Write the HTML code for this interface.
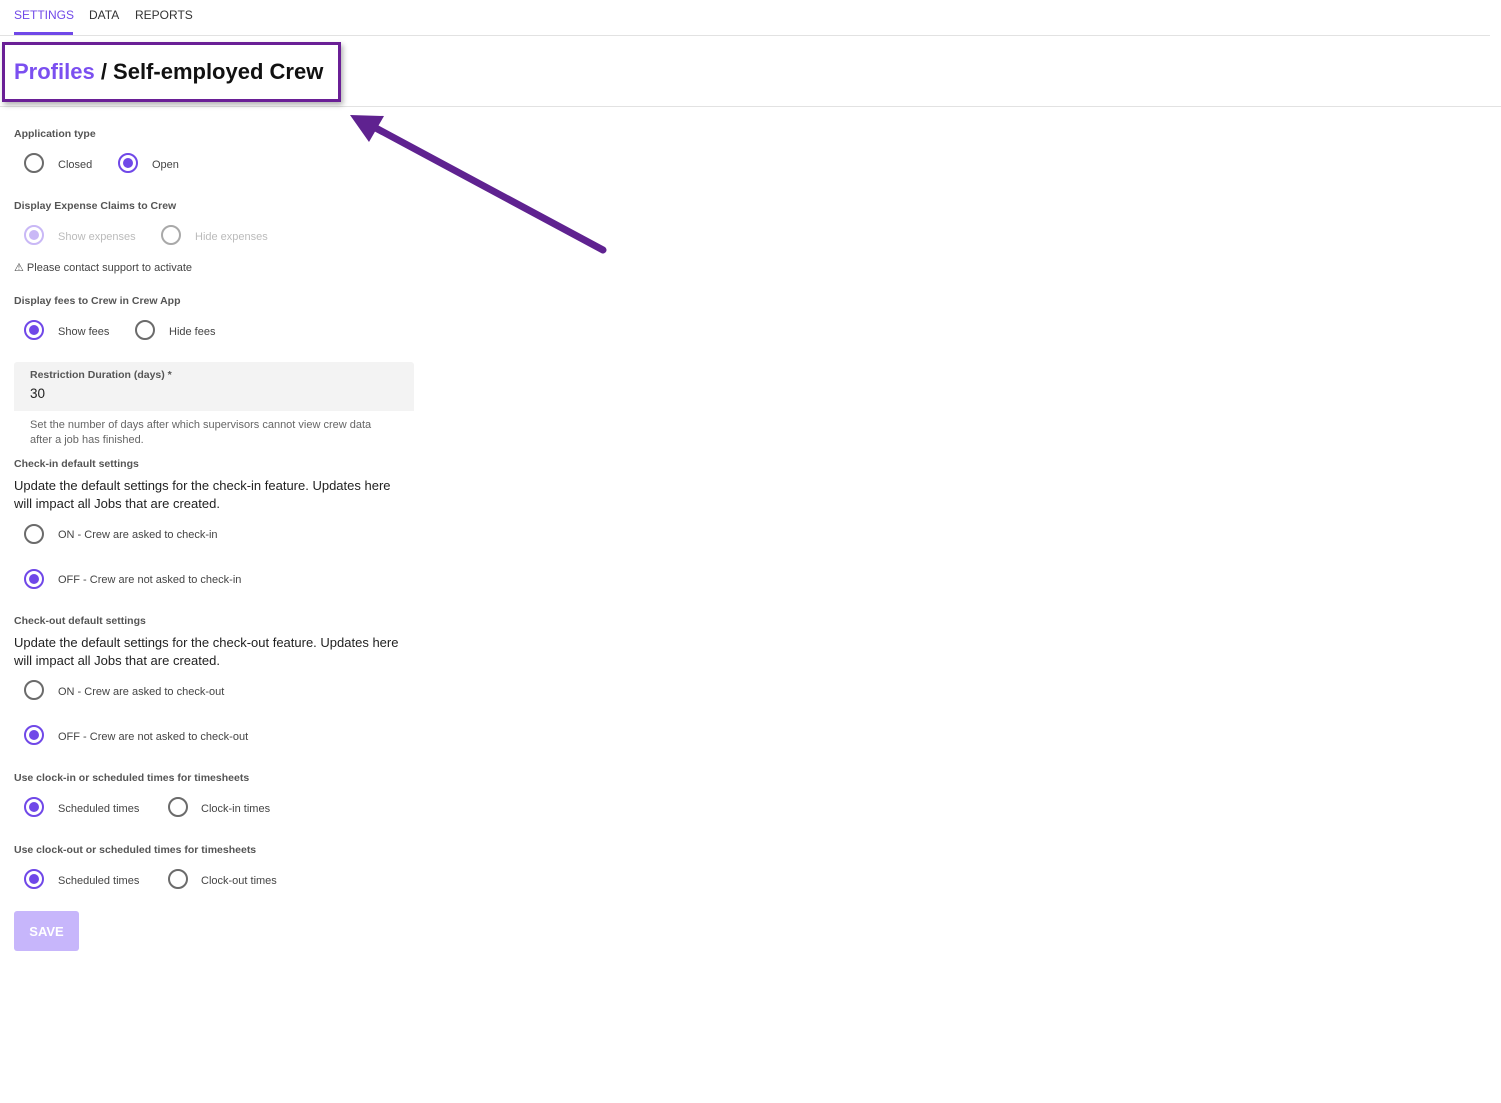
<!DOCTYPE html>
<html><head><meta charset="utf-8"><style>
html,body{margin:0;padding:0;background:#fff;width:1501px;height:1103px;overflow:hidden;position:relative;font-family:"Liberation Sans",sans-serif;}
.t{position:absolute;white-space:nowrap;line-height:16px;margin-top:1px;}
.tab{font-size:12px;color:#333;top:6px;}
.lbl{font-size:10.5px;font-weight:bold;color:#555;}
.rt{font-size:11px;color:#444;}
.p{font-size:13px;color:#222;}
.r{position:absolute;width:20px;height:20px;box-sizing:border-box;border:2px solid #6b6b6b;border-radius:50%;}
.r.on{border-color:#7048e8;}
.r.on::after{content:"";position:absolute;left:3px;top:3px;width:10px;height:10px;border-radius:50%;background:#7048e8;}
.r.dis{border-color:#c9b8f6;}
.r.dis::after{content:"";position:absolute;left:3px;top:3px;width:10px;height:10px;border-radius:50%;background:#c9b8f6;}
.r.dg{border-color:#a9a9a9;}
</style></head><body>
<div class="t tab" style="left:14px;color:#7048e8">SETTINGS</div>
<div class="t tab" style="left:89px">DATA</div>
<div class="t tab" style="left:135px">REPORTS</div>
<div style="position:absolute;left:14px;top:32px;width:59px;height:3px;background:#7048e8"></div>
<div style="position:absolute;left:0;top:35px;width:1490px;height:1px;background:#e2e2e2"></div>
<div style="position:absolute;left:0;top:106px;width:1501px;height:1px;background:#e2e2e2"></div>
<div style="position:absolute;left:2px;top:42px;width:339px;height:60px;box-sizing:border-box;border:3px solid #6a1f96;background:#fff;box-shadow:2px 3px 5px rgba(0,0,0,0.3)"></div>
<div class="t" style="left:14px;top:58px;line-height:26px;font-size:22px;font-weight:bold;color:#111"><span style="color:#7b4ff0">Profiles</span> / Self-employed Crew</div>

<svg style="position:absolute;left:0;top:0" width="700" height="300">
<line x1="603" y1="250" x2="372" y2="126" stroke="#5f2290" stroke-width="7" stroke-linecap="round"/>
<polygon points="350,115 384,116 369,142" fill="#5f2290"/>
</svg>

<div class="t lbl" style="left:14px;top:125px">Application type</div>
<div class="r" style="left:24px;top:153px"></div><div class="t rt" style="left:58px;top:156px">Closed</div>
<div class="r on" style="left:118px;top:153px"></div><div class="t rt" style="left:152px;top:156px">Open</div>

<div class="t lbl" style="left:14px;top:197px">Display Expense Claims to Crew</div>
<div class="r dis" style="left:24px;top:225px"></div><div class="t rt" style="left:58px;top:228px;color:#bbb">Show expenses</div>
<div class="r dg" style="left:161px;top:225px"></div><div class="t rt" style="left:195px;top:228px;color:#bbb">Hide expenses</div>
<div class="t rt" style="left:14px;top:259px;color:#444">⚠ Please contact support to activate</div>

<div class="t lbl" style="left:14px;top:292px">Display fees to Crew in Crew App</div>
<div class="r on" style="left:24px;top:320px"></div><div class="t rt" style="left:58px;top:323px">Show fees</div>
<div class="r" style="left:135px;top:320px"></div><div class="t rt" style="left:169px;top:323px">Hide fees</div>

<div style="position:absolute;left:14px;top:362px;width:400px;height:49px;background:#f3f3f3;border-radius:3px 3px 0 0"></div>
<div class="t" style="left:30px;top:366px;font-size:10.5px;font-weight:bold;color:#555">Restriction Duration (days) *</div>
<div class="t" style="left:30px;top:385px;font-size:13.5px;color:#222">30</div>
<div class="t" style="left:30px;top:416px;font-size:11px;color:#666">Set the number of days after which supervisors cannot view crew data</div>
<div class="t" style="left:30px;top:431px;font-size:11px;color:#666">after a job has finished.</div>

<div class="t lbl" style="left:14px;top:455px">Check-in default settings</div>
<div class="t p" style="left:14px;top:477px">Update the default settings for the check-in feature. Updates here</div>
<div class="t p" style="left:14px;top:495px">will impact all Jobs that are created.</div>
<div class="r" style="left:24px;top:524px"></div><div class="t rt" style="left:58px;top:526px">ON - Crew are asked to check-in</div>
<div class="r on" style="left:24px;top:569px"></div><div class="t rt" style="left:58px;top:571px">OFF - Crew are not asked to check-in</div>

<div class="t lbl" style="left:14px;top:612px">Check-out default settings</div>
<div class="t p" style="left:14px;top:634px">Update the default settings for the check-out feature. Updates here</div>
<div class="t p" style="left:14px;top:652px">will impact all Jobs that are created.</div>
<div class="r" style="left:24px;top:680px"></div><div class="t rt" style="left:58px;top:683px">ON - Crew are asked to check-out</div>
<div class="r on" style="left:24px;top:725px"></div><div class="t rt" style="left:58px;top:728px">OFF - Crew are not asked to check-out</div>

<div class="t lbl" style="left:14px;top:769px">Use clock-in or scheduled times for timesheets</div>
<div class="r on" style="left:24px;top:797px"></div><div class="t rt" style="left:58px;top:800px">Scheduled times</div>
<div class="r" style="left:168px;top:797px"></div><div class="t rt" style="left:201px;top:800px">Clock-in times</div>

<div class="t lbl" style="left:14px;top:841px">Use clock-out or scheduled times for timesheets</div>
<div class="r on" style="left:24px;top:869px"></div><div class="t rt" style="left:58px;top:872px">Scheduled times</div>
<div class="r" style="left:168px;top:869px"></div><div class="t rt" style="left:201px;top:872px">Clock-out times</div>

<div style="position:absolute;left:14px;top:911px;width:65px;height:40px;background:#c7b6fb;border-radius:3px;color:#fff;font-weight:bold;font-size:13px;line-height:41px;text-align:center">SAVE</div>
</body></html>
